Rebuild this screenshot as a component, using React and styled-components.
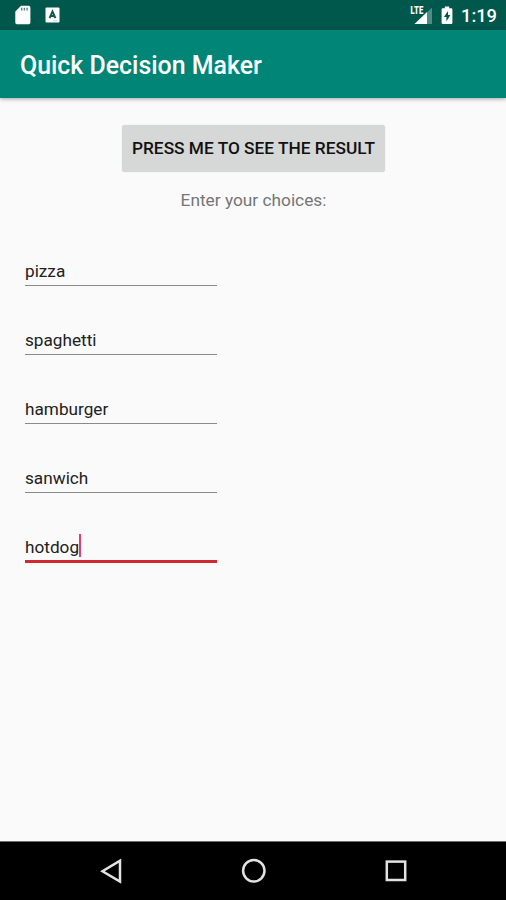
import styled, { createGlobalStyle } from "styled-components";

const choices = ["pizza", "spaghetti", "hamburger", "sanwich", "hotdog"];

export default function App() {
  return (
    <>
      <GlobalStyle />
      <Screen>
        <StatusBar>
          <StatusGroup>
            <SdCardIcon />
            <AppIcon />
          </StatusGroup>
          <StatusGroup>
            <SignalIcon />
            <BatteryIcon />
            <Clock>1:19</Clock>
          </StatusGroup>
        </StatusBar>
        <AppBar>
          <Title>Quick Decision Maker</Title>
        </AppBar>
        <Content>
          <ResultButton>Press me to see the result</ResultButton>
          <Hint>Enter your choices:</Hint>
          <Choices>
            {choices.map((choice) => (
              <Field key={choice} $focused={choice === "hotdog"}>
                <FieldText>{choice}</FieldText>
                {choice === "hotdog" && <Caret />}
              </Field>
            ))}
          </Choices>
        </Content>
        <NavBar>
          <NavButton aria-label="Back">
            <svg width="24" height="26" viewBox="0 0 24 26">
              <path d="M20 2.8v20.8L2.5 13.2z" />
            </svg>
          </NavButton>
          <NavButton aria-label="Home">
            <svg width="26" height="26" viewBox="0 0 26 26">
              <circle cx="12.8" cy="12.8" r="10.7" />
            </svg>
          </NavButton>
          <NavButton aria-label="Recent apps">
            <svg width="24" height="26" viewBox="0 0 24 26">
              <rect x="2.8" y="3.6" width="18.4" height="18.4" />
            </svg>
          </NavButton>
        </NavBar>
      </Screen>
    </>
  );
}

function SdCardIcon() {
  return (
    <svg width="16" height="20" viewBox="0 0 16 20">
      <path
        d="M6 0.8h7.8a1.6 1.6 0 0 1 1.6 1.6v15.2a1.6 1.6 0 0 1-1.6 1.6H1.9a1.6 1.6 0 0 1-1.6-1.6V6.5z"
        fill="#fff"
      />
      <path d="M6.7 2.8v2.6M9.4 2.8v2.6M12.1 2.8v2.6" stroke="#4f8a82" strokeWidth="1.4" />
    </svg>
  );
}

function AppIcon() {
  return (
    <svg width="15" height="16" viewBox="0 0 15 16">
      <rect x="0.5" y="0.5" width="14" height="15" rx="1" fill="#fff" />
      <path d="M4.6 11.2L7.5 4.4l2.9 6.8M5.6 9h3.8" fill="none" stroke="#12564e" strokeWidth="1.9" />
      <path d="M8 13.8h4.5" stroke="#a9c6c2" strokeWidth="0.8" />
    </svg>
  );
}

function SignalIcon() {
  return (
    <svg width="23" height="20" viewBox="0 0 23 20">
      <path d="M22 2.5V19H5z" fill="#4c8d84" />
      <path d="M17 7v12H4.5z" fill="#fff" />
      <SignalText x="0.6" y="9.2" textLength="12.6" lengthAdjust="spacingAndGlyphs">
        LTE
      </SignalText>
    </svg>
  );
}

function BatteryIcon() {
  return (
    <svg width="12" height="19" viewBox="0 0 12 19">
      <path
        d="M3.8 0.5h4.4v1.8h2a1.2 1.2 0 0 1 1.2 1.2v13.3a1.2 1.2 0 0 1-1.2 1.2H1.8a1.2 1.2 0 0 1-1.2-1.2V3.5a1.2 1.2 0 0 1 1.2-1.2h2z"
        fill="#fff"
      />
      <path d="M7 5L2.9 11.1h2.5v4.3l4-6.3H7z" fill="#00574b" />
    </svg>
  );
}

const GlobalStyle = createGlobalStyle`
  * {
    box-sizing: border-box;
  }

  body {
    margin: 0;
    font-family: Roboto, "Liberation Sans", sans-serif;
    background-color: #fafafa;
  }
`;

const Screen = styled.div`
  display: flex;
  flex-direction: column;
  width: 506px;
  height: 900px;
  background-color: #fafafa;
`;

const StatusBar = styled.div`
  display: flex;
  justify-content: space-between;
  align-items: center;
  height: 30px;
  padding: 0 9px 0 15px;
  background-color: #00574b;
`;

const StatusGroup = styled.div`
  display: flex;
  align-items: center;
  gap: 8px;

  &:first-child {
    gap: 14px;
  }
`;

const SignalText = styled.text`
  font-size: 10.5px;
  font-weight: 900;
  fill: #ffffff;
  stroke: #00574b;
  stroke-width: 1.2px;
  paint-order: stroke;
`;

const Clock = styled.span`
  padding-top: 2px;
  font-size: 18.3px;
  font-weight: 500;
  line-height: 28px;
  color: #ffffff;
`;

const AppBar = styled.header`
  display: flex;
  align-items: center;
  height: 68px;
  padding: 3px 20px 0;
  background-color: #008577;
  box-shadow: 0 1px 4px rgba(0, 0, 0, 0.35);
`;

const Title = styled.h1`
  margin: 0;
  font-size: 24.9px;
  font-weight: 500;
  color: #ffffff;
`;

const Content = styled.main`
  display: flex;
  flex-direction: column;
  align-items: center;
  flex: 1;
  padding-top: 27px;
`;

const ResultButton = styled.button`
  width: 263px;
  height: 47px;
  padding: 0 0 1px 1px;
  border: none;
  border-radius: 3px;
  background-color: #d6d7d7;
  box-shadow: 0 0 1px rgba(0, 0, 0, 0.2);
  font-family: inherit;
  font-size: 17.3px;
  font-weight: 500;
  text-transform: uppercase;
  white-space: nowrap;
  color: #111111;
`;

const Hint = styled.p`
  margin: 18px 0 0;
  padding-left: 1px;
  font-size: 17.3px;
  line-height: 20px;
  color: #757575;
`;

const Choices = styled.div`
  display: flex;
  flex-direction: column;
  align-self: flex-start;
  margin: 7px 0 0 25px;
`;

const Field = styled.div`
  display: flex;
  align-items: flex-end;
  width: 192px;
  height: ${(props) => (props.$focused ? "70px" : "68.9px")};
  padding-bottom: ${(props) => (props.$focused ? "3px" : "4px")};
  border-bottom: ${(props) => (props.$focused ? "3px solid #d32630" : "1.5px solid #8a8a8a")};
`;

const FieldText = styled.span`
  font-size: 17.2px;
  line-height: 20px;
  color: #212121;
`;

const Caret = styled.span`
  width: 2px;
  height: 23px;
  background-color: #dc3f75;
`;

const NavBar = styled.nav`
  display: flex;
  justify-content: center;
  align-items: center;
  gap: 94px;
  height: 59px;
  padding-left: 2px;
  border-top: 1px solid #6b6b6b;
  background-color: #000000;
`;

const NavButton = styled.button`
  display: flex;
  justify-content: center;
  width: 48px;
  padding: 0;
  border: none;
  background: none;

  svg {
    fill: none;
    stroke: #e2e2e2;
    stroke-width: 2.5px;
  }
`;
